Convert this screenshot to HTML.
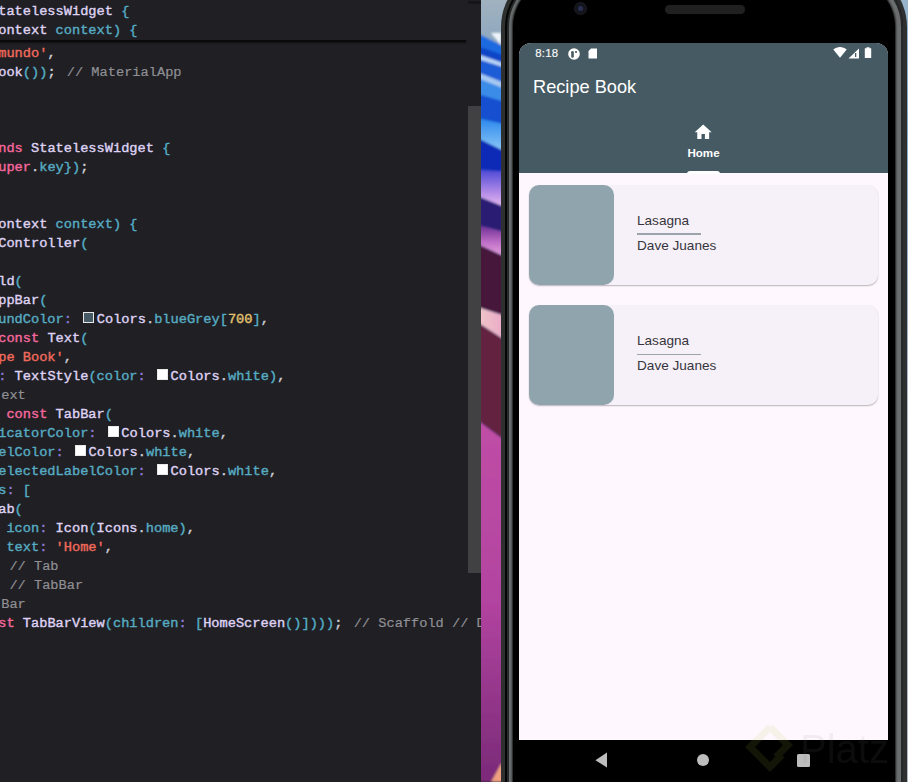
<!DOCTYPE html>
<html><head><meta charset="utf-8">
<style>
html,body{margin:0;padding:0;width:908px;height:782px;overflow:hidden;background:#1f1f24;}
*{box-sizing:border-box;}
#editor{position:absolute;left:0;top:0;width:481px;height:782px;background:#1f1f24;overflow:hidden;}
.code{position:absolute;left:-1.8px;font-family:"Liberation Mono",monospace;font-size:13.67px;line-height:19px;white-space:pre;font-weight:normal;-webkit-text-stroke:0.4px currentColor;}
.ln{height:19px;}
#sticky{top:2px;}
#main{top:43.7px;}
.k{color:#f4679d;}
.c{color:#dfd2f3;}
.p{color:#57abc2;}
.s{color:#f06a5c;}
.n{color:#e3c26f;}
.u{color:#cfcfd6;}
.b{color:#55adc4;}
.o{color:#9078d4;}
.m{color:#909094;-webkit-text-stroke:0.2px currentColor;margin-left:3px;}
.sw{display:inline-block;width:11px;height:11px;border:1px solid #e8e8e8;margin-left:3px;margin-right:2.6px;vertical-align:-0.5px;}
#sep{position:absolute;left:0;top:39.5px;width:466px;height:2px;background:#0a0a0c;box-shadow:0 1px 2px rgba(0,0,0,0.5);}
#scroll{position:absolute;left:467.5px;top:106px;width:13.5px;height:466.7px;background:#414144;}
#scrolltop{position:absolute;left:468px;top:1px;width:13px;height:3px;background:#161618;}
#wall{position:absolute;left:481px;top:0;width:27px;height:782px;overflow:hidden;}
#phone{position:absolute;left:501px;top:-33px;width:406px;height:900px;border-radius:60px;background:#2e3030;}
#phone .l2{position:absolute;left:4px;top:4px;right:4.5px;bottom:4px;border-radius:56px;background:#050505;}
#phone .l3{position:absolute;left:6px;top:6px;right:4.5px;bottom:6px;border-radius:54px;background:#6a6e6e;border:2.5px solid #26292a;}
#phone .l4{position:absolute;left:12px;top:12px;right:12.2px;bottom:12px;border-radius:48px;background:#000;box-shadow:0 0 2px 0.6px rgba(0,0,0,0.75);}
#camera{position:absolute;left:575px;top:3px;width:11px;height:11px;border-radius:50%;background:#14141c;box-shadow:0 0 0 1px #1c1c24;}
#camera:after{content:"";position:absolute;left:3px;top:3px;width:5px;height:5px;border-radius:50%;background:#2a2f55;}
#speaker{position:absolute;left:660px;top:5px;width:0;height:0;}
#screen{position:absolute;left:519px;top:43px;width:369px;height:697px;background:#fef7fe;border-radius:12px 12px 0 0;overflow:hidden;font-family:"Liberation Sans",sans-serif;}
#appbar{position:absolute;left:0;top:0;width:369px;height:130px;background:#455a63;}
#time{position:absolute;left:16.2px;top:2px;font-size:11.4px;color:#f4f6f6;line-height:16px;letter-spacing:0.25px;-webkit-text-stroke:0.2px #f4f6f6;}
#title{position:absolute;left:14px;top:31.7px;font-size:18.2px;color:#ffffff;line-height:24px;}
#tabico{position:absolute;left:174px;top:79px;width:20.4px;height:20.4px;}
#tablbl{position:absolute;left:0;width:369px;text-align:center;top:103px;font-size:11.6px;font-weight:bold;color:#fff;line-height:14px;}
#ind{position:absolute;left:168px;top:128px;width:33px;height:3px;background:#fff;border-radius:3px 3px 0 0;}
.card{position:absolute;left:10px;width:348.5px;height:100px;background:#f6f1f9;border-radius:10px;box-shadow:0 1px 1.5px rgba(0,0,0,0.28);}
.card .img{position:absolute;left:0;top:0;width:85px;height:100px;background:#90a4ae;border-radius:10px;}
.card .t1{position:absolute;left:108px;top:28px;font-size:13.6px;color:#36343c;line-height:16px;}
.card .dv{position:absolute;left:108px;top:48.6px;width:64px;height:1.7px;background:#9ba3ab;}
.card .t2{position:absolute;left:108px;top:53px;font-size:13.6px;color:#36343c;line-height:16px;}
#nav{position:absolute;left:519px;top:740px;width:369px;height:42px;background:#000;}
</style></head><body>
<div id="editor">
  <div class="code" id="sticky"><div class="ln"><span class="c">tatelessWidget</span><span class="u">&nbsp;</span><span class="b">{</span></div><div class="ln"><span class="c">ontext</span><span class="u">&nbsp;</span><span class="p">context</span><span class="b">)</span><span class="u">&nbsp;</span><span class="b">{</span></div></div>
  <div id="sep"></div>
  <div class="code" id="main"><div class="ln"><span class="s">mundo&#x27;</span><span class="u">,</span></div><div class="ln"><span class="c">ook</span><span class="b">()</span><span class="b">)</span><span class="u">;</span><span class="m">&nbsp;//&nbsp;MaterialApp</span></div><div class="ln"></div><div class="ln"></div><div class="ln"></div><div class="ln"><span class="k">nds</span><span class="u">&nbsp;</span><span class="c">StatelessWidget</span><span class="u">&nbsp;</span><span class="b">{</span></div><div class="ln"><span class="k">uper</span><span class="u">.</span><span class="p">key</span><span class="b">}</span><span class="b">)</span><span class="u">;</span></div><div class="ln"></div><div class="ln"></div><div class="ln"><span class="c">ontext</span><span class="u">&nbsp;</span><span class="p">context</span><span class="b">)</span><span class="u">&nbsp;</span><span class="b">{</span></div><div class="ln"><span class="c">Controller</span><span class="b">(</span></div><div class="ln"></div><div class="ln"><span class="c">ld</span><span class="b">(</span></div><div class="ln"><span class="c">ppBar</span><span class="b">(</span></div><div class="ln"><span class="p">undColor</span><span class="o">:</span><span class="u">&nbsp;</span><i class="sw" style="background:#455a64"></i><span class="c">Colors</span><span class="u">.</span><span class="p">blueGrey</span><span class="b">[</span><span class="n">700</span><span class="b">]</span><span class="u">,</span></div><div class="ln"><span class="k">const</span><span class="u">&nbsp;</span><span class="c">Text</span><span class="b">(</span></div><div class="ln"><span class="s">pe&nbsp;Book&#x27;</span><span class="u">,</span></div><div class="ln"><span class="o">:</span><span class="u">&nbsp;</span><span class="c">TextStyle</span><span class="b">(</span><span class="p">color</span><span class="o">:</span><span class="u">&nbsp;</span><i class="sw" style="background:#ffffff"></i><span class="c">Colors</span><span class="u">.</span><span class="p">white</span><span class="b">)</span><span class="u">,</span></div><div class="ln"><span class="m">ext</span></div><div class="ln"><span class="u">&nbsp;</span><span class="k">const</span><span class="u">&nbsp;</span><span class="c">TabBar</span><span class="b">(</span></div><div class="ln"><span class="p">icatorColor</span><span class="o">:</span><span class="u">&nbsp;</span><i class="sw" style="background:#ffffff"></i><span class="c">Colors</span><span class="u">.</span><span class="p">white</span><span class="u">,</span></div><div class="ln"><span class="p">elColor</span><span class="o">:</span><span class="u">&nbsp;</span><i class="sw" style="background:#ffffff"></i><span class="c">Colors</span><span class="u">.</span><span class="p">white</span><span class="u">,</span></div><div class="ln"><span class="p">electedLabelColor</span><span class="o">:</span><span class="u">&nbsp;</span><i class="sw" style="background:#ffffff"></i><span class="c">Colors</span><span class="u">.</span><span class="p">white</span><span class="u">,</span></div><div class="ln"><span class="p">s</span><span class="o">:</span><span class="u">&nbsp;</span><span class="b">[</span></div><div class="ln"><span class="c">ab</span><span class="b">(</span></div><div class="ln"><span class="u">&nbsp;</span><span class="p">icon</span><span class="o">:</span><span class="u">&nbsp;</span><span class="c">Icon</span><span class="b">(</span><span class="c">Icons</span><span class="u">.</span><span class="p">home</span><span class="b">)</span><span class="u">,</span></div><div class="ln"><span class="u">&nbsp;</span><span class="p">text</span><span class="o">:</span><span class="u">&nbsp;</span><span class="s">&#x27;Home&#x27;</span><span class="u">,</span></div><div class="ln"><span class="m">&nbsp;//&nbsp;Tab</span></div><div class="ln"><span class="m">&nbsp;//&nbsp;TabBar</span></div><div class="ln"><span class="m">Bar</span></div><div class="ln"><span class="k">st</span><span class="u">&nbsp;</span><span class="c">TabBarView</span><span class="b">(</span><span class="p">children</span><span class="o">:</span><span class="u">&nbsp;</span><span class="b">[</span><span class="c">HomeScreen</span><span class="b">()</span><span class="b">]</span><span class="b">)))</span><span class="u">;</span><span class="m">&nbsp;//&nbsp;Scaffold&nbsp;//&nbsp;D</span></div></div>
  <div id="scroll"></div>
  <div id="scrolltop"></div>
</div>
<svg id="wall" width="27" height="782" viewBox="0 0 27 782">
<defs><filter id="wb" x="-20%" y="-5%" width="140%" height="110%"><feGaussianBlur stdDeviation="0.8"/></filter>
<linearGradient id="g0" x1="0" y1="0" x2="0" y2="1"><stop offset="0" stop-color="#a3b3c0"/><stop offset="1" stop-color="#8aa6bf"/></linearGradient>
<linearGradient id="gpk" x1="0" y1="0" x2="0" y2="1"><stop offset="0" stop-color="#4e4ad6"/><stop offset="0.6" stop-color="#b890e8"/><stop offset="1" stop-color="#f4c8f0"/></linearGradient>
<linearGradient id="gpk2" x1="0" y1="0" x2="0" y2="1"><stop offset="0" stop-color="#6a2a90"/><stop offset="0.5" stop-color="#c070c8"/><stop offset="1" stop-color="#f0b0e0"/></linearGradient>
<linearGradient id="glb" x1="0" y1="0" x2="0" y2="1"><stop offset="0" stop-color="#2a88ec"/><stop offset="1" stop-color="#98cff8"/></linearGradient>
<linearGradient id="gmg" x1="0" y1="0" x2="0" y2="1"><stop offset="0" stop-color="#c04ea6"/><stop offset="0.5" stop-color="#b244a0"/><stop offset="1" stop-color="#7a2a78"/></linearGradient>
<linearGradient id="gpc" x1="0" y1="0" x2="1" y2="0"><stop offset="0" stop-color="#f0c8c8"/><stop offset="1" stop-color="#e8a0c8"/></linearGradient>
</defs>
<g filter="url(#wb)"><rect x="-4" y="-4" width="35" height="54" fill="url(#g0)"/>
<polygon points="-4,33 20,45 31,49 31,782 -4,782" fill="#1a6ae0"/>
<polygon points="10,33 20,33 20,45" fill="#eef4fb"/>
<polygon points="-4,46 31,58 31,66 -4,54" fill="#0d44c6"/>
<polygon points="-4,54 31,66 31,70 -4,59" fill="#b8d4f6"/>
<polygon points="-4,59 31,70 31,86 -4,72" fill="#1b5cd6"/>
<polygon points="-4,72 31,86 31,92 -4,78" fill="#a6c9f2"/>
<polygon points="-4,78 31,92 31,104 -4,94" fill="#3a8ce8"/>
<polygon points="-4,94 31,104 31,126 -4,118" fill="#1350d0"/>
<polygon points="-4,118 31,126 31,155 -4,138" fill="url(#glb)"/>
<polygon points="-4,138 31,155 31,172 -4,170" fill="#0b2cb6"/>
<polygon points="-4,170 31,172 31,210 -4,196" fill="url(#gpk)"/>
<polygon points="-4,196 31,210 31,234 -4,225" fill="#2a1a72"/>
<polygon points="-4,225 31,234 31,260 -4,244" fill="url(#gpk2)"/>
<polygon points="-4,244 31,260 31,318 -4,307" fill="#47173a"/>
<polygon points="-4,307 31,318 31,345 -4,322" fill="url(#gpc)"/>
<polygon points="-4,322 31,345 31,446 -4,420" fill="#642040"/>
<polygon points="-4,420 31,446 31,782 -4,782" fill="url(#gmg)"/>
<polygon points="10,782 20,764 31,760 31,782" fill="#f0a080"/>
</g></svg>
<div style="position:absolute;left:885px;top:0;width:23px;height:782px;background:linear-gradient(180deg,#97b4cc,#86a9c6 120px,#aab6c6 400px,#b0b8c8);"></div>
<div id="phone"><div class="l2"></div><div class="l3"></div><div class="l4"></div></div>
<div id="camera"></div>
<div style="position:absolute;left:665px;top:5px;width:80px;height:8.5px;border-radius:4.5px;background:#202021;box-shadow:0 0 1px #111"></div>
<div id="screen">
  <div id="appbar">
    <div id="time">8:18</div>
    <svg style="position:absolute;left:48px;top:4px" width="14" height="14" viewBox="0 0 14 14"><circle cx="7" cy="7" r="5.8" fill="#fff"/><rect x="4.2" y="4" width="2.6" height="6.8" rx="1.3" fill="#455a63"/><circle cx="9" cy="5" r="1.1" fill="#455a63"/></svg>
    <svg style="position:absolute;left:69px;top:4.5px" width="10" height="11" viewBox="0 0 10 11"><path d="M3 0.5H9V10.5H0.5V3Z" fill="#fff"/></svg>
    <svg style="position:absolute;left:314px;top:3.5px" width="14" height="11" viewBox="0 0 14 11"><path d="M0.3 2.6C2.2 1 4.5 0 7 0S11.8 1 13.7 2.6L7 10.8Z" fill="#fff"/></svg>
    <svg style="position:absolute;left:328.5px;top:4.5px" width="11.5" height="11" viewBox="0 0 11.5 11"><path d="M11.2 0.3V10.6H0.5Z" fill="#fff"/><rect x="7" y="5" width="1.3" height="4" fill="#455a63"/></svg>
    <svg style="position:absolute;left:345px;top:3.5px" width="8" height="11.5" viewBox="0 0 8 11.5"><path d="M2.5 0.3H5.5V1.2H7.2V11.3H0.8V1.2H2.5Z" fill="#fff"/></svg>
    <div id="title">Recipe Book</div>
    <svg id="tabico" viewBox="0 0 24 24"><path d="M10 20v-6h4v6h5v-8h3L12 3 2 12h3v8z" fill="#fff"/></svg>
    <div id="tablbl">Home</div>
    <div id="ind"></div>
  </div>
  <div class="card" style="top:141.5px"><div class="img"></div><div class="t1">Lasagna</div><div class="dv"></div><div class="t2">Dave Juanes</div></div>
  <div class="card" style="top:262px"><div class="img"></div><div class="t1">Lasagna</div><div class="dv"></div><div class="t2">Dave Juanes</div></div>
</div>
<div id="nav">
  <svg style="position:absolute;left:76px;top:12px" width="13" height="16" viewBox="0 0 13 16"><path d="M0.4 8.2L12 0.5V15.5Z" fill="#bdbdbd"/></svg>
  <div style="position:absolute;left:177.8px;top:13.8px;width:12.5px;height:12.5px;border-radius:50%;background:#bdbdbd"></div>
  <div style="position:absolute;left:278.3px;top:13.8px;width:13.2px;height:12.8px;border-radius:1.5px;background:#bdbdbd"></div>
</div>
<svg style="position:absolute;left:740px;top:715px" width="148" height="67" viewBox="0 0 148 67">
<g opacity="0.10"><path d="M30 12 L10 32 L30 52 L42 40" fill="none" stroke="#b8d040" stroke-width="7" stroke-linejoin="miter"/><path d="M30 12 L48 30 L36 42" fill="none" stroke="#b8d040" stroke-width="7"/></g>
<text x="60" y="48" font-family="Liberation Sans" font-size="40" fill="#808080" opacity="0.09">Platzi</text>
</svg>
</body></html>
